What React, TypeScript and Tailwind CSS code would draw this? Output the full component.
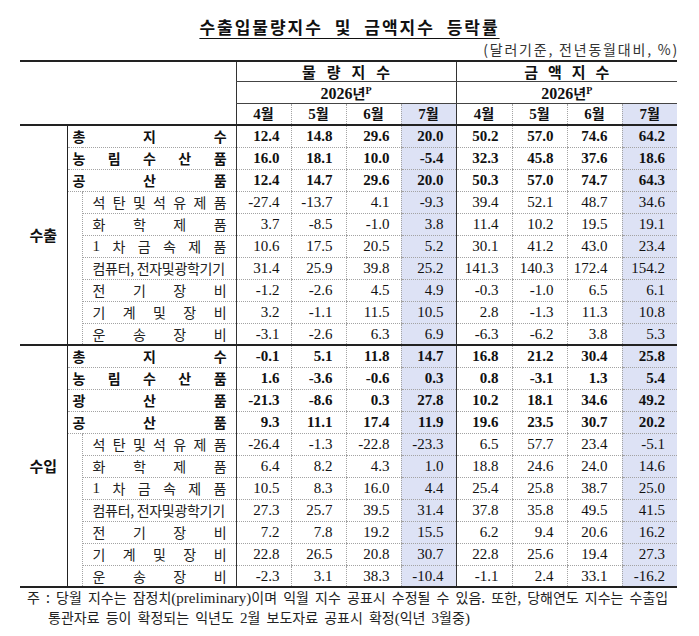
import React from "react";

type Row = {
    label: string[] | string;
    bold?: boolean;
    values: string[];
};

const exportRows: Row[] = [
    { label: ["총", "지", "수"], bold: true, values: ["12.4", "14.8", "29.6", "20.0", "50.2", "57.0", "74.6", "64.2"] },
    { label: ["농", "림", "수", "산", "품"], bold: true, values: ["16.0", "18.1", "10.0", "-5.4", "32.3", "45.8", "37.6", "18.6"] },
    { label: ["공", "산", "품"], bold: true, values: ["12.4", "14.7", "29.6", "20.0", "50.3", "57.0", "74.7", "64.3"] },
    { label: ["석", "탄", "및", "석", "유", "제", "품"], values: ["-27.4", "-13.7", "4.1", "-9.3", "39.4", "52.1", "48.7", "34.6"] },
    { label: ["화", "학", "제", "품"], values: ["3.7", "-8.5", "-1.0", "3.8", "11.4", "10.2", "19.5", "19.1"] },
    { label: ["1", "차", "금", "속", "제", "품"], values: ["10.6", "17.5", "20.5", "5.2", "30.1", "41.2", "43.0", "23.4"] },
    { label: "컴퓨터, 전자및광학기기", values: ["31.4", "25.9", "39.8", "25.2", "141.3", "140.3", "172.4", "154.2"] },
    { label: ["전", "기", "장", "비"], values: ["-1.2", "-2.6", "4.5", "4.9", "-0.3", "-1.0", "6.5", "6.1"] },
    { label: ["기", "계", "및", "장", "비"], values: ["3.2", "-1.1", "11.5", "10.5", "2.8", "-1.3", "11.3", "10.8"] },
    { label: ["운", "송", "장", "비"], values: ["-3.1", "-2.6", "6.3", "6.9", "-6.3", "-6.2", "3.8", "5.3"] },
];

const importRows: Row[] = [
    { label: ["총", "지", "수"], bold: true, values: ["-0.1", "5.1", "11.8", "14.7", "16.8", "21.2", "30.4", "25.8"] },
    { label: ["농", "림", "수", "산", "품"], bold: true, values: ["1.6", "-3.6", "-0.6", "0.3", "0.8", "-3.1", "1.3", "5.4"] },
    { label: ["광", "산", "품"], bold: true, values: ["-21.3", "-8.6", "0.3", "27.8", "10.2", "18.1", "34.6", "49.2"] },
    { label: ["공", "산", "품"], bold: true, values: ["9.3", "11.1", "17.4", "11.9", "19.6", "23.5", "30.7", "20.2"] },
    { label: ["석", "탄", "및", "석", "유", "제", "품"], values: ["-26.4", "-1.3", "-22.8", "-23.3", "6.5", "57.7", "23.4", "-5.1"] },
    { label: ["화", "학", "제", "품"], values: ["6.4", "8.2", "4.3", "1.0", "18.8", "24.6", "24.0", "14.6"] },
    { label: ["1", "차", "금", "속", "제", "품"], values: ["10.5", "8.3", "16.0", "4.4", "25.4", "25.8", "38.7", "25.0"] },
    { label: "컴퓨터, 전자및광학기기", values: ["27.3", "25.7", "39.5", "31.4", "37.8", "35.8", "49.5", "41.5"] },
    { label: ["전", "기", "장", "비"], values: ["7.2", "7.8", "19.2", "15.5", "6.2", "9.4", "20.6", "16.2"] },
    { label: ["기", "계", "및", "장", "비"], values: ["22.8", "26.5", "20.8", "30.7", "22.8", "25.6", "19.4", "27.3"] },
    { label: ["운", "송", "장", "비"], values: ["-2.3", "3.1", "38.3", "-10.4", "-1.1", "2.4", "33.1", "-16.2"] },
];

// per data column: left border, right padding, background
const colCls = [
    "[border-left-style:solid] border-l-[#333] pr-[11px]",
    "pr-[13px]",
    "pr-[11px]",
    "pr-[12px] bg-[#dde2f5]",
    "[border-left-style:solid] border-l-[#333] pr-[13px]",
    "pr-[13px]",
    "pr-[14px]",
    "pr-[12px] bg-[#dde2f5]",
];

const sans = "font-['Noto_Sans_CJK_KR',sans-serif]";
const serif = "font-['Liberation_Serif',serif]";

function Label({ label, bold }: { label: string[] | string; bold?: boolean }) {
    if (typeof label === "string") {
        return <span className="block whitespace-nowrap text-[14px] tracking-[-0.3px] text-[#222]">{label}</span>;
    }
    return (
        <span className={"flex justify-between " + (bold ? "text-[14px] font-bold text-[#111]" : "text-[14px] text-[#222]")}>
            {label.map((c, i) => (
                <span key={i} className={c === "1" ? serif + " text-[15px]" : ""}>
                    {c}
                </span>
            ))}
        </span>
    );
}

function Section({ title, rows, last }: { title: string; rows: Row[]; last?: boolean }) {
    const firstSub = rows.findIndex((r) => !r.bold);
    const subCount = rows.length - firstSub;
    return (
        <>
            {rows.map((row, ri) => {
                const top = ri === 0;
                const bottom = last && ri === rows.length - 1;
                const topCls = top ? "border-t-2 [border-top-style:solid] border-t-[#222]" : "";
                const botCls = bottom ? "border-b-2 [border-bottom-style:solid] border-b-[#222]" : "";
                return (
                    <tr key={ri} className="h-[22px]">
                        {top && (
                            <td
                                rowSpan={rows.length}
                                className={`p-0 border-r border-r-[#222] border-t-2 border-t-[#222] text-center align-middle text-[15px] leading-[18px] font-bold ${sans} ${last ? "border-b-2 border-b-[#222]" : ""}`}
                            >
                                {title}
                            </td>
                        )}
                        {row.bold ? (
                            <td colSpan={2} className={`p-0 pl-[5px] pr-[9px] border-b border-dotted border-[#a3a3a3] ${sans} leading-[18px] ${topCls} ${botCls}`}>
                                <Label label={row.label} bold />
                            </td>
                        ) : (
                            <>
                                {ri === firstSub && (
                                    <td rowSpan={subCount} className={`p-0 border-r border-dotted border-[#a3a3a3] ${last ? "border-b-2 [border-bottom-style:solid] border-b-[#222]" : ""}`} />
                                )}
                                <td className={`p-0 pl-[10px] pr-[9px] border-b border-dotted border-[#a3a3a3] ${sans} leading-[18px] ${botCls}`}>
                                    <Label label={row.label} />
                                </td>
                            </>
                        )}
                        {row.values.map((v, ci) => (
                            <td
                                key={ci}
                                className={`p-0 text-right border-b border-l border-dotted border-[#a3a3a3] ${serif} text-[15px] leading-[18px] text-[#111] ${row.bold ? "font-bold" : ""} ${colCls[ci]} ${topCls} ${botCls}`}
                            >
                                {v}
                            </td>
                        ))}
                    </tr>
                );
            })}
        </>
    );
}

function Year() {
    return (
        <span className="font-bold">
            <span className={serif + " text-[16px]"}>2026</span>
            <span className={sans + " text-[14px]"}>년</span>
            <span className={serif + " text-[10px] align-[5px]"}>P</span>
        </span>
    );
}

function Month({ m }: { m: number }) {
    return (
        <span className="font-bold">
            <span className={serif + " text-[15px]"}>{m}</span>
            <span className={sans + " text-[14px]"}>월</span>
        </span>
    );
}

function Spaced({ text, gap }: { text: string; gap: string }) {
    return (
        <span className={"flex justify-center " + gap}>
            {text.split("").map((c, i) => (
                <span key={i}>{c}</span>
            ))}
        </span>
    );
}

export default function App() {
    const months = [4, 5, 6, 7, 4, 5, 6, 7];
    return (
        <div className="w-[699px] h-[636px] bg-white pt-[15px] px-[20px] text-[#111]">
            <div className={`h-[24px] text-center leading-[24px] text-[17px] font-bold tracking-[2px] ${sans}`}>
                <span className="underline decoration-1 underline-offset-[4px] [word-spacing:6px]">수출입물량지수 및 금액지수 등락률</span>
            </div>
            <div className={`h-[21px] text-right leading-[21px] text-[14px] tracking-[1.8px] text-[#333] ${sans}`}>
                (달러기준, 전년동월대비, %)
            </div>

            <table className="w-[657px] table-fixed border-collapse">
                <colgroup>
                    <col className="w-[47px]" />
                    <col className="w-[15px]" />
                    <col className="w-[154px]" />
                    <col className="w-[55px]" />
                    <col className="w-[55px]" />
                    <col className="w-[55px]" />
                    <col className="w-[55px]" />
                    <col className="w-[56px]" />
                    <col className="w-[55px]" />
                    <col className="w-[55px]" />
                    <col className="w-[55px]" />
                </colgroup>
                <thead>
                    <tr className="h-[20px]">
                        <td colSpan={3} rowSpan={3} className="p-0 border-t-2 border-t-[#222]" />
                        <th colSpan={4} className={`p-0 border-t-2 border-t-[#222] border-l border-l-[#333] border-b border-b-[#444] text-[15px] font-bold leading-[17px] ${sans}`}>
                            <Spaced text="물량지수" gap="gap-[11px]" />
                        </th>
                        <th colSpan={4} className={`p-0 border-t-2 border-t-[#222] border-l border-l-[#333] border-b border-b-[#444] text-[15px] font-bold leading-[17px] ${sans}`}>
                            <Spaced text="금액지수" gap="gap-[10px]" />
                        </th>
                    </tr>
                    <tr className="h-[21px]">
                        <th colSpan={4} className="p-0 border-l border-l-[#333] border-b border-b-[#444] leading-[18px]">
                            <Year />
                        </th>
                        <th colSpan={4} className="p-0 border-l border-l-[#333] border-b border-b-[#444] leading-[18px]">
                            <Year />
                        </th>
                    </tr>
                    <tr className="h-[22px]">
                        {months.map((m, i) => (
                            <th
                                key={i}
                                className={
                                    "p-0 leading-[18px] border-l " +
                                    (i === 0 || i === 4 ? "border-l-[#333]" : "border-dotted border-l-[#a3a3a3]") +
                                    (i === 3 || i === 7 ? " bg-[#dde2f5]" : "")
                                }
                            >
                                <Month m={m} />
                            </th>
                        ))}
                    </tr>
                </thead>
                <tbody>
                    <Section title="수출" rows={exportRows} />
                    <Section title="수입" rows={importRows} last />
                </tbody>
            </table>

            <div className={`text-[14px] leading-[19px] text-[#222] whitespace-nowrap [word-spacing:3px] ${sans}`}>
                <div className="pl-[7px]">
                    주 : 당월 지수는 잠정치<span className={serif + " text-[15px]"}>(preliminary)</span>이며 익월 지수 공표시 수정될 수 있음. 또한, 당해연도 지수는 수출입
                </div>
                <div className="pl-[28px]">
                    통관자료 등이 확정되는 익년도 <span className={serif + " text-[15px]"}>2</span>월 보도자료 공표시 확정<span className={serif + " text-[15px]"}>(</span>익년 <span className={serif + " text-[15px]"}>3</span>월중<span className={serif + " text-[15px]"}>)</span>
                </div>
            </div>
        </div>
    );
}
